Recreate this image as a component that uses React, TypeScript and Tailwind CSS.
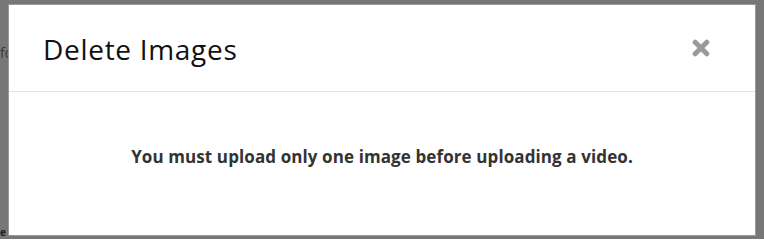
import React from "react";

function CloseIcon() {
  return (
    <svg width="18" height="18" viewBox="0 0 18 18" aria-hidden="true">
      <path
        d="M3.2 3.2 L14.8 14.8 M14.8 3.2 L3.2 14.8"
        stroke="#9a9a9a"
        strokeWidth="5"
        strokeLinecap="round"
      />
    </svg>
  );
}

export default function App() {
  return (
    <div
      className="relative w-[764px] h-[239px] overflow-hidden bg-[#777777]"
      style={{ fontFamily: '"Open Sans", "Liberation Sans", sans-serif' }}
    >
      {/* faint page content behind the backdrop */}
      <span className="absolute left-0 top-[46px] text-[14px] leading-none text-[#3a3a3a]">fo</span>
      <span className="absolute left-0 top-[227px] text-[10px] leading-none font-bold text-[#222]">e this!!</span>

      <div className="absolute left-[8px] top-[4px] w-[748px] h-[232px] bg-white border border-[#9a9a9a] flex flex-col">
        <div className="h-[87px] flex items-center justify-between pl-[34px] pr-[45px] border-b border-[#e5e5e5]">
          <h2 className="text-[28px] leading-none tracking-[0.7px] text-[#111] pt-[1px]">Delete Images</h2>
          <CloseIcon />
        </div>
        <div className="flex-1 flex justify-center pt-[53px]">
          <p className="text-[17px] leading-[24px] font-bold tracking-[0.1px] text-[#333]">
            You must upload only one image before uploading a video.
          </p>
        </div>
      </div>
    </div>
  );
}
